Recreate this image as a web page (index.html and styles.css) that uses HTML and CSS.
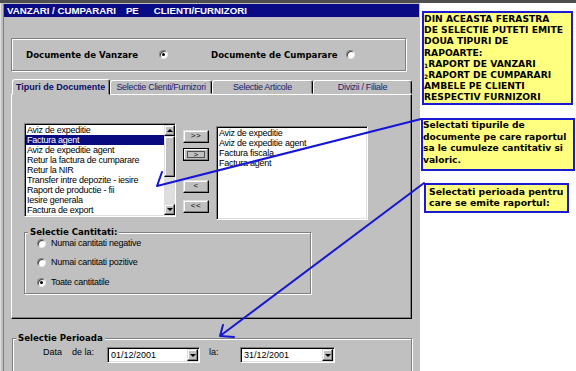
FILE: index.html
```html
<!DOCTYPE html>
<html lang="ro">
<head>
    <meta charset="UTF-8">
    <title>Vanzari / Cumparari pe clienti/furnizori</title>
    <link rel="stylesheet" href="styles.css">
</head>
<body>
<div class="screen">
    <div class="topline"></div>
    <div class="window">
        <div class="frame">
            <div class="titlebar">VANZARI / CUMPARARI<span class="gap1">PE</span><span class="gap2">CLIENTI/FURNIZORI</span></div>

            <div class="content">
                <div class="doc-type">
                    <span class="doc-label">Documente de Vanzare</span>
                    <span class="radio checked"></span>
                    <span class="doc-label second">Documente de Cumparare</span>
                    <span class="radio"></span>
                </div>

                <div class="tabs">
                    <div class="tab active">Tipuri de Documente</div>
                    <div class="tab w2">Selectie Clienti/Furnizori</div>
                    <div class="tab w3">Selectie Articole</div>
                    <div class="tab w4">Divizii / Filiale</div>
                </div>

                <div class="tab-panel">
                    <div class="lists">
                        <div class="listbox">
                            <div class="list-items">
                                <div class="item">Aviz de expeditie</div>
                                <div class="item selected">Factura agent</div>
                                <div class="item">Aviz de expeditie agent</div>
                                <div class="item">Retur la factura de cumparare</div>
                                <div class="item">Retur la NIR</div>
                                <div class="item">Transfer intre depozite - iesire</div>
                                <div class="item">Raport de productie - fii</div>
                                <div class="item">Iesire generala</div>
                                <div class="item">Factura de export</div>
                            </div>
                            <div class="scrollbar">
                                <div class="sb-btn"><span class="tri up"></span></div>
                                <div class="thumb"></div>
                                <div class="track"></div>
                                <div class="sb-btn"><span class="tri down"></span></div>
                            </div>
                        </div>

                        <div class="move-buttons">
                            <div class="btn">&gt;&gt;</div>
                            <div class="btn focused"><span class="focus-rect">&gt;</span></div>
                            <div class="btn b3">&lt;</div>
                            <div class="btn b4">&lt;&lt;</div>
                        </div>

                        <div class="listbox right">
                            <div class="list-items">
                                <div class="item">Aviz de expeditie</div>
                                <div class="item">Aviz de expeditie agent</div>
                                <div class="item">Factura fiscala</div>
                                <div class="item">Factura agent</div>
                            </div>
                        </div>
                    </div>

                    <div class="group cantitati">
                        <div class="group-title">Selectie Cantitati:</div>
                        <div class="radio-row r1"><span class="radio"></span><span class="radio-label">Numai cantitati negative</span></div>
                        <div class="radio-row r2"><span class="radio"></span><span class="radio-label">Numai cantitati pozitive</span></div>
                        <div class="radio-row r3"><span class="radio checked"></span><span class="radio-label">Toate cantitatile</span></div>
                    </div>
                </div>

                <div class="group perioada">
                    <div class="group-title">Selectie Perioada</div>
                    <div class="period-row">
                        <span class="lbl lbl-data">Data</span>
                        <span class="lbl lbl-de">de la:</span>
                        <div class="combo c1">
                            <span class="combo-text">01/12/2001</span>
                            <span class="combo-btn"><span class="tri down"></span></span>
                        </div>
                        <span class="lbl lbl-la">la:</span>
                        <div class="combo c2">
                            <span class="combo-text">31/12/2001</span>
                            <span class="combo-btn"><span class="tri down"></span></span>
                        </div>
                    </div>
                </div>
            </div>
        </div>
    </div>

    <div class="note note-1">
        <div>DIN ACEASTA FERASTRA</div>
        <div>DE SELECTIE PUTETI EMITE</div>
        <div>DOUA TIPURI DE</div>
        <div>RAPOARTE:</div>
        <div><span class="idx">1</span>RAPORT DE VANZARI</div>
        <div><span class="idx">2</span>RAPORT DE CUMPARARI</div>
        <div>AMBELE PE CLIENTI</div>
        <div>RESPECTIV FURNIZORI</div>
    </div>
    <div class="note note-2">
        <div>Selectati tipurile de</div>
        <div>documente pe care raportul</div>
        <div>sa le cumuleze cantitativ si</div>
        <div>valoric.</div>
    </div>
    <div class="note note-3">
        <div>Selectati perioada pentru</div>
        <div>care se emite raportul:</div>
    </div>

    <svg class="arrows" width="576" height="371" viewBox="0 0 576 371">
        <path d="M421 119 L157 186 M157 186 L162 172" />
        <path d="M424 183 L220 336 M220 336 L223 325 M220 336 L234 337" />
    </svg>
</div>
</body>
</html>
```

FILE: styles.css
```css
* {
    box-sizing: border-box;
}
body {
    margin: 0;
    background: #fff;
    color: #000;
    font-family: "Liberation Sans", Arial, sans-serif;
    font-size: 9px;
}
.screen {
    position: relative;
    width: 576px;
    height: 371px;
    overflow: hidden;
}
.topline {
    height: 3px;
    background: #4e4e4e;
}
.window {
    width: 420px;
    height: 368px;
    background: #c0c0c0;
    padding: 1px 1px 0 3px;
    box-shadow: inset 1px 0 #dfdfdf;
}
.frame {
    height: 100%;
    border-left: 1px solid #808080;
}
.titlebar {
    height: 13px;
    background: #0a0a84;
    color: #fff;
    font-weight: bold;
    font-size: 9.7px;
    line-height: 13px;
    padding-left: 3px;
    white-space: nowrap;
}
.gap1 {
    margin-left: 10px;
}
.gap2 {
    margin-left: 15px;
}
.content {
    padding-left: 7px;
}

/* radio */
.radio {
    display: inline-block;
    flex: none;
    width: 9px;
    height: 9px;
    border-radius: 50%;
    background: #fff;
    border: 1px solid;
    border-color: #808080 #e8e8e8 #e8e8e8 #808080;
    box-shadow: inset 1px 1px #404040;
    position: relative;
}
.radio.checked::after {
    content: "";
    position: absolute;
    left: 2px;
    top: 2px;
    width: 3px;
    height: 3px;
    border-radius: 50%;
    background: #000;
}

/* group boxes */
.doc-type {
    margin-top: 21px;
    width: 395px;
    height: 33px;
    border: 1px solid #808080;
    box-shadow: inset 1px 1px #fff, 1px 1px #fff;
    display: flex;
    align-items: center;
    padding-left: 14px;
    font-family: "DejaVu Sans", Verdana, sans-serif;
    font-weight: bold;
    font-size: 8.6px;
}
.doc-label {
    width: 133px;
    white-space: nowrap;
}
.doc-label.second {
    margin-left: 43px;
    width: 135px;
}
.group {
    border: 1px solid #808080;
    box-shadow: inset 1px 1px #fff, 1px 1px #fff;
}
.group-title {
    display: table;
    margin: -7px 0 0 3px;
    padding: 0 2px;
    background: #c0c0c0;
    font-family: "DejaVu Sans", Verdana, sans-serif;
    font-weight: bold;
    font-size: 8.6px;
    line-height: 12px;
}

/* tabs */
.tabs {
    display: flex;
    margin-top: 9px;
    padding-left: 1px;
    height: 14px;
}
.tab {
    height: 14px;
    border: 1px solid;
    border-color: #fff #000 transparent #fff;
    border-radius: 3px 3px 0 0;
    box-shadow: inset -1px 0 #808080;
    color: #1c1c6c;
    text-align: center;
    line-height: 12px;
    letter-spacing: -0.3px;
    white-space: nowrap;
    overflow: hidden;
}
.tab.active {
    position: relative;
    z-index: 1;
    width: 98px;
    height: 16px;
    margin-top: -1px;
    background: #c0c0c0;
    color: #0c0c66;
    font-weight: bold;
    font-size: 9px;
    letter-spacing: 0;
    text-align: left;
    padding-left: 3px;
    line-height: 14px;
}
.tab.w2 {
    width: 102px;
}
.tab.w3 {
    width: 101px;
}
.tab.w4 {
    width: 99px;
}
.tab-panel {
    width: 401px;
    height: 225px;
    border: 1px solid;
    border-color: #fff #000 #000 #fff;
    box-shadow: inset -1px -1px #808080;
    padding: 28px 0 0 12px;
}

/* lists */
.lists {
    display: flex;
    align-items: flex-start;
}
.listbox {
    display: flex;
    width: 152px;
    height: 94px;
    background: #fff;
    border: 1px solid;
    border-color: #808080 #fff #fff #808080;
    box-shadow: inset 1px 1px #000, inset -1px -1px #dfdfdf;
    padding: 1px 0 1px 1px;
    overflow: hidden;
}
.listbox.right {
    margin-top: 3px;
    padding-right: 1px;
}
.list-items {
    flex: 1;
    line-height: 10px;
    letter-spacing: -0.25px;
    overflow: hidden;
}
.item {
    padding-left: 1px;
    white-space: nowrap;
}
.item.selected {
    background: #0a0a80;
    color: #fff;
}
.scrollbar {
    display: flex;
    flex-direction: column;
    width: 11px;
}
.sb-btn,
.thumb,
.btn,
.combo-btn {
    background: #c0c0c0;
    border: 1px solid;
    border-color: #dfdfdf #000 #000 #dfdfdf;
    box-shadow: inset -1px -1px #808080, inset 1px 1px #fff;
}
.sb-btn {
    height: 11px;
    display: flex;
    align-items: center;
    justify-content: center;
}
.thumb {
    height: 41px;
}
.track {
    flex: 1;
    background: #dedede;
}
.tri {
    display: block;
    width: 0;
    height: 0;
    border-left: 3px solid transparent;
    border-right: 3px solid transparent;
}
.tri.up {
    border-bottom: 3px solid #000;
}
.tri.down {
    border-top: 3px solid #000;
}

/* move buttons */
.move-buttons {
    display: flex;
    flex-direction: column;
    margin: 7px 7px 0;
}
.btn {
    width: 26px;
    height: 13px;
    font-size: 8px;
    line-height: 10px;
    text-align: center;
    letter-spacing: 0.5px;
}
.btn.focused {
    margin-top: 5px;
    border-color: #000;
    padding: 2px 3px;
}
.focus-rect {
    display: block;
    height: 7px;
    border: 1px solid #505050;
    line-height: 5px;
}
.btn.b3 {
    margin-top: 19px;
}
.btn.b4 {
    margin-top: 7px;
}

/* cantitati */
.cantitati {
    width: 287px;
    height: 62px;
    margin-top: 12px;
}
.radio-row {
    display: flex;
    align-items: center;
    height: 12px;
    margin-left: 12px;
}
.radio-row.r1 {
    margin-top: -1px;
}
.radio-row.r2 {
    margin-top: 7px;
}
.radio-row.r3 {
    margin-top: 8px;
}
.radio-label {
    margin-left: 5px;
    letter-spacing: -0.25px;
}

/* perioada */
.perioada {
    width: 400px;
    height: 40px;
    margin: 19px 0 0 1px;
}
.period-row {
    display: flex;
    align-items: flex-start;
    margin-top: 3px;
    padding-left: 30px;
}
.lbl {
    line-height: 10px;
}
.lbl-data {
    width: 29px;
}
.lbl-de {
    width: 35px;
}
.lbl-la {
    width: 31px;
    margin-left: 9px;
}
.combo {
    display: flex;
    height: 16px;
    background: #fff;
    border: 1px solid;
    border-color: #808080 #fff #fff #808080;
    box-shadow: inset 1px 1px #000, inset -1px -1px #dfdfdf;
    padding: 1px;
}
.combo.c1 {
    width: 93px;
}
.combo.c2 {
    width: 95px;
}
.combo-text {
    flex: 1;
    padding-left: 2px;
    line-height: 12px;
}
.combo-btn {
    width: 11px;
    display: flex;
    align-items: center;
    justify-content: center;
}

/* notes */
.note {
    position: absolute;
    background: #ffff80;
    border: 2px solid #1a1ad0;
    font-family: "DejaVu Sans", Verdana, sans-serif;
    font-weight: bold;
    white-space: nowrap;
    overflow: hidden;
}
.note-1 {
    left: 422px;
    top: 11px;
    width: 151px;
    height: 94px;
    padding-left: 0;
    font-size: 9.2px;
    line-height: 11.2px;
}
.idx {
    font-size: 6px;
    line-height: 0;
    vertical-align: -1px;
}
.note-2 {
    left: 421px;
    top: 118px;
    width: 154px;
    height: 53px;
    padding-left: 0;
    font-size: 9.1px;
    line-height: 11.7px;
}
.note-3 {
    left: 424px;
    top: 183px;
    width: 145px;
    height: 30px;
    padding: 2px 0 0 3px;
    font-size: 9.3px;
    line-height: 10.6px;
}
.arrows {
    position: absolute;
    left: 0;
    top: 0;
    pointer-events: none;
}
.arrows path {
    fill: none;
    stroke: #1616d6;
    stroke-width: 2;
    stroke-linecap: round;
}
```
